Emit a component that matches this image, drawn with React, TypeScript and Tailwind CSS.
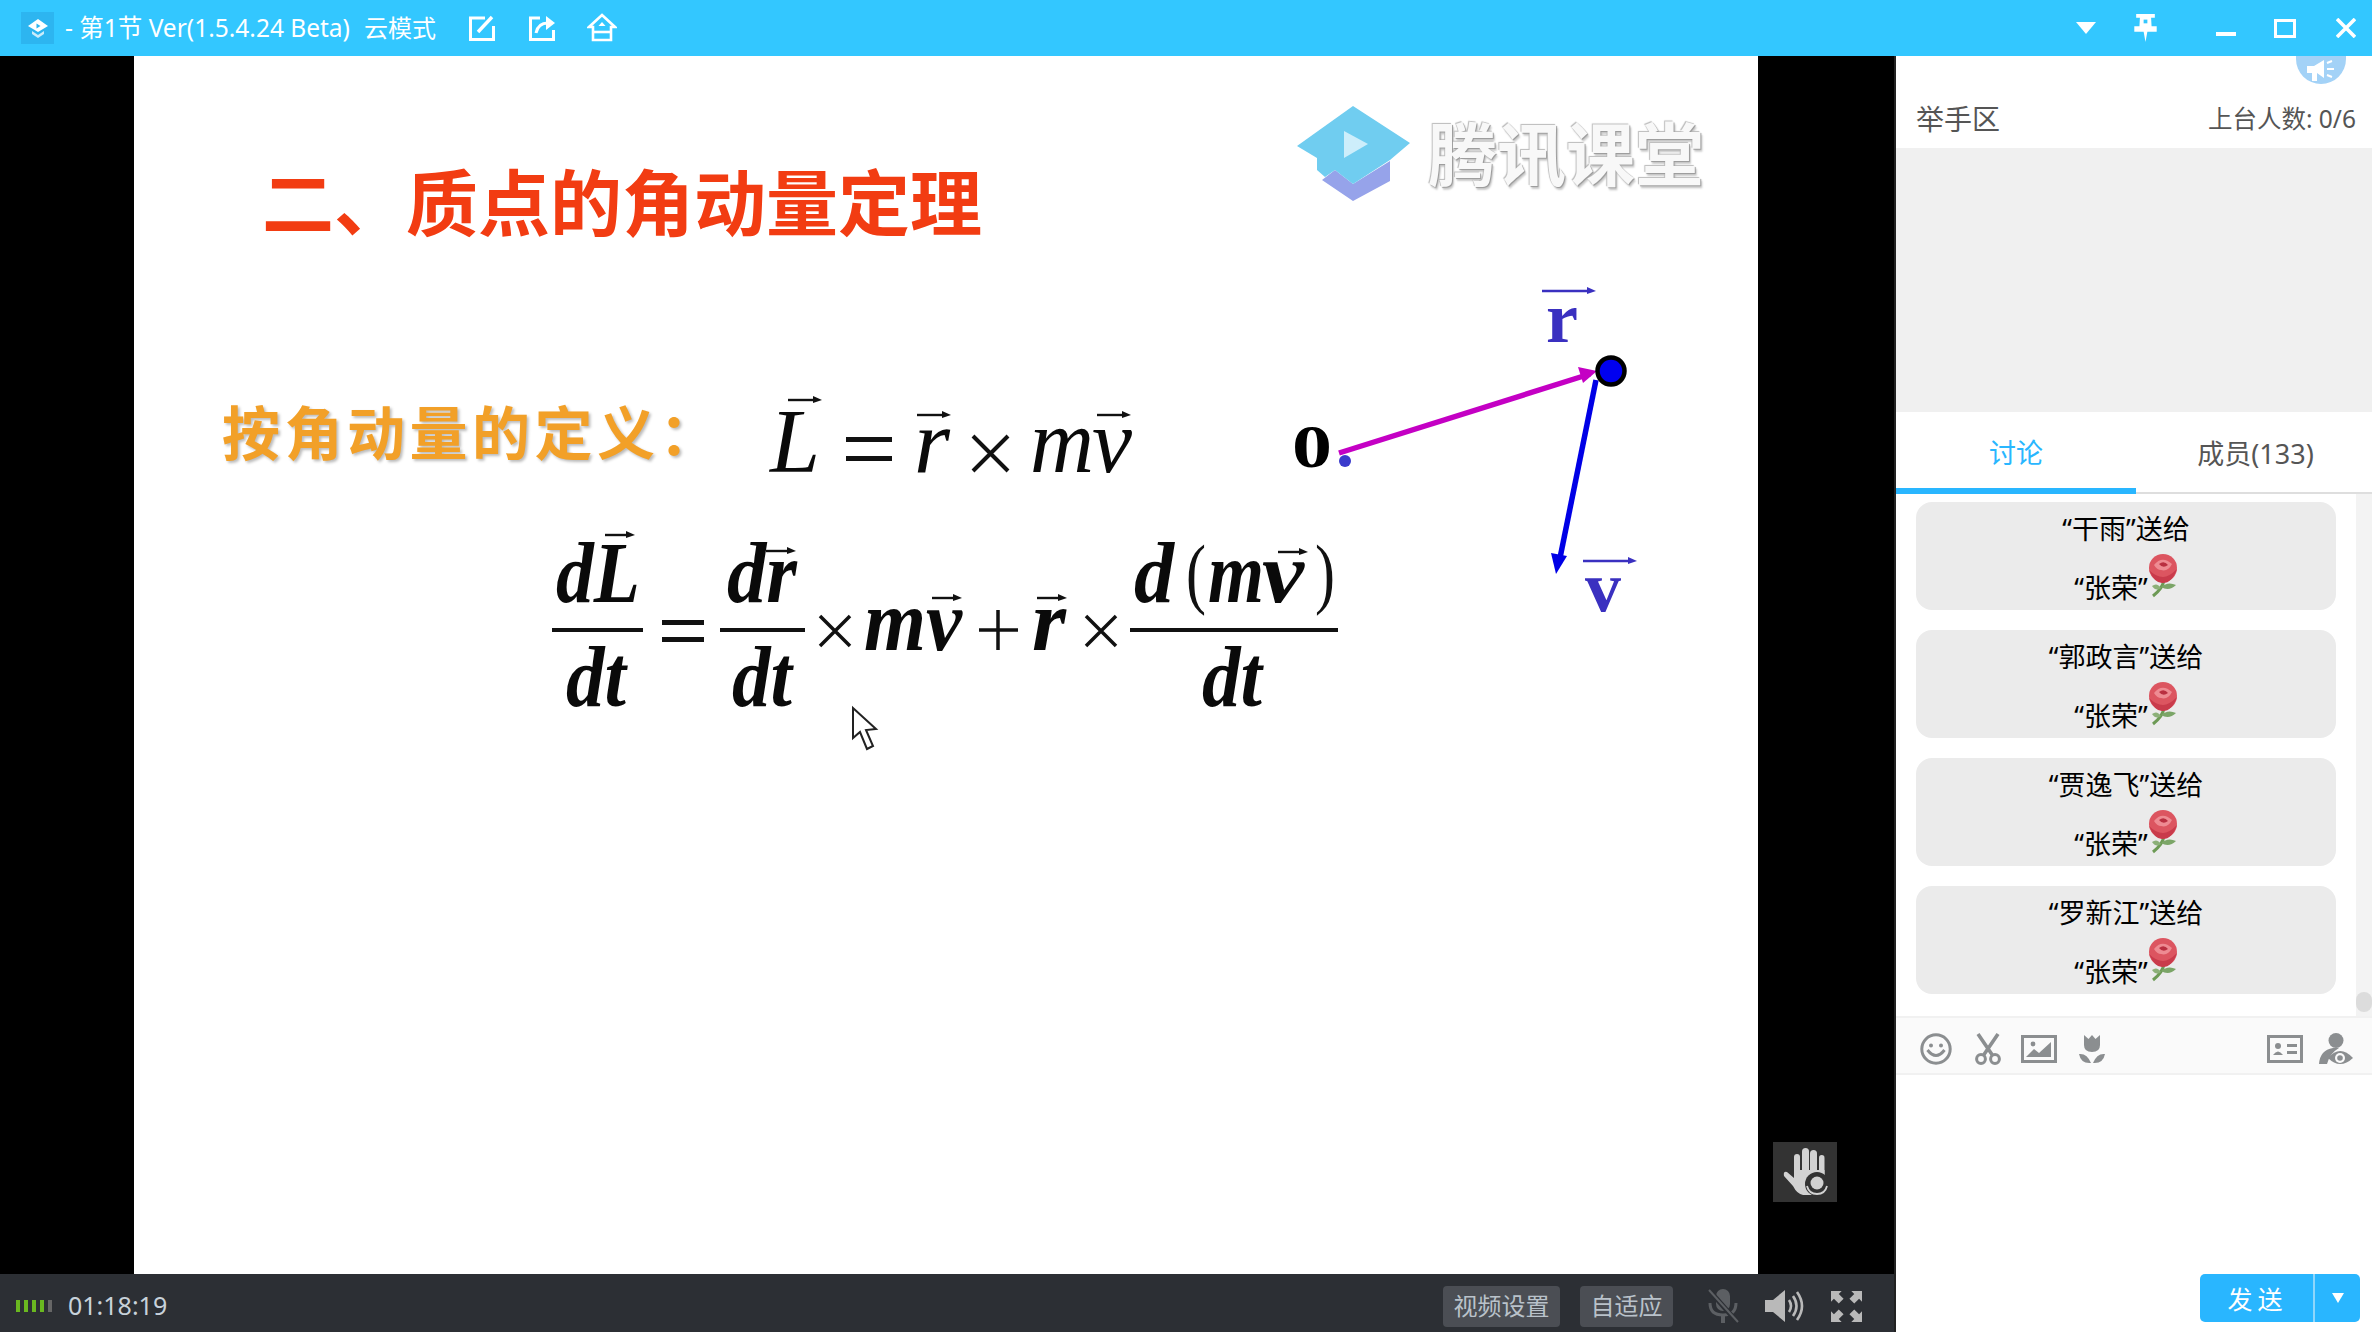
import type { ReactNode } from 'react';

const serif = "font-['Liberation_Serif',serif]";

const gifts = ['干雨', '郭政言', '贾逸飞', '罗新江'];

// little arrow that sits above a vector letter on the slide
function Vec({ x, y, w, color = '#111' }: { x: number; y: number; w: number; color?: string }) {
  return (
    <g>
      <line x1={x} y1={y} x2={x + w - 6} y2={y} stroke={color} strokeWidth="2.4" />
      <path d={`M${x + w - 9} ${y - 4} L${x + w} ${y} L${x + w - 9} ${y + 3} Z`} fill={color} />
    </g>
  );
}

function MathText({ x, y, w, size, bold = true, children }: { x: number; y: number; w: number; size: number; bold?: boolean; children: ReactNode }) {
  return (
    <text
      x={x}
      y={y}
      textLength={w}
      lengthAdjust="spacingAndGlyphs"
      fontSize={size}
      fontStyle="italic"
      fontWeight={bold ? 700 : 400}
      fill="#0a0a0a"
    >
      {children}
    </text>
  );
}

function Bar({ x, w, y = 630 }: { x: number; w: number; y?: number }) {
  return <rect x={x} y={y - 2} width={w} height={4} fill="#111" />;
}

function Formulas() {
  return (
    <svg viewBox="134 56 1624 1218" className={`absolute inset-0 h-full w-full ${serif}`}>
      {/* L = r x mv */}
      <MathText x={770} y={472} w={50} size={92} bold={false}>L</MathText>
      <Vec x={788} y={400} w={34} />
      <rect x={846} y={437} width={46} height={5} fill="#111" />
      <rect x={846} y={456} width={46} height={5} fill="#111" />
      <MathText x={914} y={472} w={36} size={92} bold={false}>r</MathText>
      <Vec x={917} y={415} w={34} />
      <path d="M973 436 L1008 471 M1008 436 L973 471" stroke="#111" strokeWidth="4" />
      <MathText x={1030} y={472} w={64} size={92} bold={false}>m</MathText>
      <MathText x={1092} y={472} w={40} size={92} bold={false}>v</MathText>
      <Vec x={1097} y={415} w={34} />

      {/* dL/dt = dr/dt x mv + r x d(mv)/dt */}
      <MathText x={556} y={602} w={84} size={86}>dL</MathText>
      <Vec x={605} y={535} w={30} />
      <Bar x={552} w={91} />
      <MathText x={566} y={706} w={60} size={86}>dt</MathText>
      <rect x={662} y={620} width={42} height={5} fill="#111" />
      <rect x={662} y={637} width={42} height={5} fill="#111" />
      <MathText x={727} y={602} w={70} size={86}>dr</MathText>
      <Vec x={766} y={551} w={30} />
      <Bar x={720} w={85} />
      <MathText x={732} y={706} w={60} size={86}>dt</MathText>
      <path d="M820 616 L850 646 M850 616 L820 646" stroke="#111" strokeWidth="3.5" />
      <MathText x={864} y={650} w={62} size={86}>m</MathText>
      <MathText x={926} y={650} w={36} size={86}>v</MathText>
      <Vec x={932} y={598} w={30} />
      <path d="M998 610 V650 M979 630 H1018" stroke="#111" strokeWidth="3.5" />
      <MathText x={1032} y={650} w={34} size={86}>r</MathText>
      <Vec x={1037} y={598} w={30} />
      <path d="M1086 616 L1116 646 M1116 616 L1086 646" stroke="#111" strokeWidth="3.5" />
      <MathText x={1134} y={602} w={40} size={86}>d</MathText>
      <text x={1186} y={599} fontSize={78} fill="#111" textLength={20} lengthAdjust="spacingAndGlyphs">(</text>
      <MathText x={1208} y={602} w={56} size={86}>m</MathText>
      <MathText x={1262} y={602} w={42} size={86}>v</MathText>
      <Vec x={1278} y={552} w={30} />
      <text x={1315} y={599} fontSize={78} fill="#111" textLength={20} lengthAdjust="spacingAndGlyphs">)</text>
      <Bar x={1130} w={208} />
      <MathText x={1202} y={706} w={60} size={86}>dt</MathText>

      {/* diagram on the right */}
      <text x={1292} y={467} fontSize={62} fontWeight={700} fill="#000" textLength={40} lengthAdjust="spacingAndGlyphs">0</text>
      <circle cx={1345} cy={461} r={6} fill="#3a3acc" />
      <line x1={1339} y1={453} x2={1590} y2={374} stroke="#c400c4" strokeWidth="5.5" />
      <path d="M1597 371 L1578 367 L1583 383 Z" fill="#c400c4" />
      <line x1={1596} y1={380} x2={1560} y2={558} stroke="#0000e6" strokeWidth="5.5" />
      <path d="M1556 574 L1551 553 L1567 556 Z" fill="#0000e6" />
      <circle cx={1611} cy={371} r={13.5} fill="#0000f0" stroke="#000" strokeWidth="4.5" />
      <text x={1546} y={342} fontSize={72} fontWeight={700} fill="#3a30c0" textLength={32} lengthAdjust="spacingAndGlyphs">r</text>
      <Vec x={1542} y={291} w={54} color="#3a30c0" />
      <text x={1585} y={611} fontSize={72} fontWeight={700} fill="#3a30c0" textLength={36} lengthAdjust="spacingAndGlyphs">v</text>
      <Vec x={1583} y={561} w={54} color="#3a30c0" />

      {/* mouse pointer */}
      <path d="M853 708 L853 738 L860 732 L867 749 L873 746 L866 730 L876 729 Z" fill="#fff" stroke="#222" strokeWidth="2" />

      {/* logo cap */}
      <path d="M1322 180 L1335 170 L1353 184 L1390 161 V181 L1353 201 Z" fill="#96a3ea" />
      <path d="M1297 146 L1353 106 L1410 143 L1390 160 L1353 184 L1335 170 L1325 177 L1317 170 V158 Z" fill="#70cdf0" />
      <path d="M1344 131 L1368 144 L1344 158 Z" fill="#cdeefb" />
    </svg>
  );
}

function Slide() {
  return (
    <div className="relative flex-1 bg-white blur-[0.5px]">
      <h1 className="absolute left-[128px] top-[100px] text-[72px] leading-[92px] font-bold whitespace-nowrap text-[#f23c12]">
        二、质点的角动量定理
      </h1>
      <p className="absolute left-[88px] top-[339px] text-[58px] leading-[76px] font-bold tracking-[4.5px] whitespace-nowrap text-[#f2a028] [text-shadow:2px_2px_3px_#bbb]">
        按角动量的定义：
      </p>
      <span className="absolute left-[1294px] top-[53px] text-[69px] leading-[90px] font-bold whitespace-nowrap text-[#f8f8f8] [text-shadow:1px_1px_1px_#999,-1px_-1px_1px_#bbb,2px_3px_2px_#ccc]">
        腾讯课堂
      </span>
      <Formulas />
    </div>
  );
}

function Rose() {
  return (
    <svg viewBox="0 0 30 44" className="mb-[9px] h-[44px] w-[30px]">
      <path d="M16 26 Q15 34 5 42" stroke="#6d9a55" strokeWidth="3" fill="none" />
      <path d="M13 33 Q20 27 28 31 Q21 38 13 33 Z" fill="#7ba567" />
      <path d="M4 32 Q9 28 13 34 Q8 38 4 32 Z" fill="#8cb078" />
      <circle cx="15" cy="14" r="14" fill="#dc5560" />
      <path d="M1 16 Q7 30 15 29 Q24 29 29 15 Q21 23 15 23 Q8 23 1 16 Z" fill="#c93b4b" />
      <path d="M6 11 Q14 1 24 10 Q20 18 13 16 Q9 16 6 11 Z" fill="#ee8b92" />
      <path d="M11 10 Q16 6 20 11 Q15 15 11 10 Z" fill="#b92f40" />
    </svg>
  );
}

function GiftCard({ name }: { name: string }) {
  return (
    <div className="flex h-[108px] w-[420px] flex-col items-center rounded-[16px] bg-[#ebebeb] pt-[7px] text-[27px] text-black">
      <div className="leading-[40px]">“{name}”送给</div>
      <div className="flex h-[58px] items-end justify-center">
        <span className="leading-[38px]">“张荣”</span>
        <Rose />
      </div>
    </div>
  );
}

function Toolbar() {
  return (
    <div className="flex h-[59px] items-center border-y-2 border-[#f1f1f1] bg-[#fafafa] pt-[6px] pr-[19px] pl-[24px] text-[#8b8e90]">
      <svg viewBox="0 0 32 32" className="h-[32px] w-[32px]" fill="none" stroke="currentColor" strokeWidth="3">
        <circle cx="16" cy="16" r="14.2" />
        <circle cx="11" cy="12.5" r="2" fill="currentColor" stroke="none" />
        <circle cx="21" cy="12.5" r="2" fill="currentColor" stroke="none" />
        <path d="M7.5 17 Q16 28 24.5 17" />
      </svg>
      <svg viewBox="0 0 28 32" className="ml-[22px] h-[32px] w-[28px]" fill="none" stroke="currentColor">
        <path d="M4 1 L19 23 M24 1 L9 23" strokeWidth="3.6" />
        <circle cx="7" cy="26" r="4.4" strokeWidth="3" />
        <circle cx="21" cy="26" r="4.4" strokeWidth="3" />
      </svg>
      <svg viewBox="0 0 36 28" className="ml-[19px] h-[28px] w-[36px]">
        <rect x="1.5" y="1.5" width="33" height="25" fill="none" stroke="currentColor" strokeWidth="3" />
        <circle cx="12" cy="9" r="2.4" fill="currentColor" />
        <path d="M5 22 L13 14 L18 18 L30 7 V22 Z" fill="currentColor" />
      </svg>
      <svg viewBox="0 0 26 30" className="ml-[22px] h-[30px] w-[26px]" fill="currentColor">
        <path d="M5 1 L9.5 5 L13 1 L16.5 5 L21 1 V11 Q21 18 13 18 Q5 18 5 11 Z" />
        <path d="M0 20 Q8 19 12 29 Q2 30 0 20 Z" />
        <path d="M26 20 Q18 19 14 29 Q24 30 26 20 Z" />
      </svg>
      <div className="ml-auto flex items-center gap-[16px]">
        <svg viewBox="0 0 36 28" className="h-[28px] w-[36px]">
          <rect width="36" height="28" fill="currentColor" />
          <rect x="3" y="3" width="30" height="22" fill="#fafafa" />
          <circle cx="11" cy="11" r="3" fill="currentColor" />
          <path d="M6 20 Q11 13 16 20 Z" fill="currentColor" />
          <rect x="20" y="9" width="10" height="3" fill="currentColor" />
          <rect x="20" y="16" width="10" height="3" fill="currentColor" />
        </svg>
        <svg viewBox="0 0 34 32" className="h-[32px] w-[34px]" fill="currentColor">
          <circle cx="17" cy="7.5" r="7.5" />
          <path d="M0 31 Q1 17 14 15 L20 15 Q11 20 8 31 Z" />
          <path d="M9 25 Q21 11 34 25 Q21 37 9 25 Z" />
          <circle cx="21" cy="25" r="5" fill="#fafafa" />
          <circle cx="21" cy="25" r="2.8" />
        </svg>
      </div>
    </div>
  );
}

function TitleBar() {
  return (
    <div className="flex h-[56px] items-center bg-[#33c7ff] pr-[16px] pl-[21px] text-white">
      <div className="flex h-[32px] w-[33px] items-center justify-center bg-[#2db5f0]">
        <svg viewBox="0 0 24 24" className="h-[24px] w-[24px]" fill="#fff">
          <path d="M12 3 L22 10 L12 16 L2 10 Z" />
          <path d="M6 15 L12 19 L18 15 V18 L12 22 L6 18 Z" opacity="0.75" />
          <path d="M10.5 7.5 L14.5 10 L10.5 12.5 Z" fill="#2db5f0" />
        </svg>
      </div>
      <span className="ml-[11px] text-[24.5px] whitespace-pre">- 第1节 Ver(1.5.4.24 Beta)</span>
      <span className="ml-[14px] text-[24px]">云模式</span>
      <svg viewBox="0 0 28 28" className="ml-[32px] h-[28px] w-[28px]" fill="none" stroke="#fff" strokeWidth="3">
        <path d="M17 4 H2.5 V25.5 H25.5 V12" />
        <path d="M10 18 L24 3" strokeWidth="3.4" />
      </svg>
      <svg viewBox="0 0 28 28" className="ml-[32px] h-[28px] w-[28px]" fill="none" stroke="#fff" strokeWidth="3">
        <path d="M12 4 H2.5 V25.5 H25.5 V16" />
        <path d="M8 19 Q10 9 20 9" />
        <path d="M18 2 L27 9 L18 16 Z" fill="#fff" stroke="none" />
      </svg>
      <svg viewBox="0 0 30 30" className="ml-[31px] h-[30px] w-[30px]" fill="none" stroke="#fff" strokeWidth="2.6">
        <path d="M15 2 L28 14 H24 V27 H6 V14 H2 Z" />
        <path d="M6 19 H24" />
        <path d="M15 9 L18.5 13 H11.5 Z" fill="#fff" stroke="none" />
      </svg>

      <div className="ml-auto flex items-center">
        <svg viewBox="0 0 20 12" className="h-[12px] w-[20px]">
          <path d="M0 0 H20 L10 12 Z" fill="#fff" />
        </svg>
        <svg viewBox="0 0 24 30" className="ml-[38px] h-[28px] w-[23px]" fill="#fff">
          <path d="M2 0 H22 V4 H18 L18.5 13 H24 V19 H14 L12 30 L10 19 H0 V13 H5.5 L6 4 H2 Z" />
          <rect x="10" y="6" width="4" height="4" fill="#33c7ff" />
        </svg>
        <div className="mt-[12px] ml-[59px] h-[4px] w-[20px] bg-white" />
        <div className="ml-[38px] h-[19px] w-[22px] border-[3.5px] border-white" />
        <svg viewBox="0 0 20 20" className="ml-[40px] h-[20px] w-[20px]" stroke="#fff" strokeWidth="3.6">
          <path d="M1 1 L19 19 M19 1 L1 19" />
        </svg>
      </div>
    </div>
  );
}

function BottomBar() {
  return (
    <div className="flex h-[58px] items-center bg-[#2c2f34] pt-[6px] pr-[32px] pl-[16px]">
      <div className="flex gap-[4px]">
        {['#6ab820', '#6ab820', '#6ab820', '#6ab820', '#666666'].map((c, i) => (
          <i key={i} className="block h-[12px] w-[4px]" style={{ background: c }} />
        ))}
      </div>
      <span className="ml-[16px] text-[25px] text-[#c8d2da]">01:18:19</span>
      <div className="ml-auto flex items-center">
        <span className="flex h-[41px] w-[117px] items-center justify-center rounded-[4px] bg-[#4b4e54] text-[24px] text-[#b9c2ca]">视频设置</span>
        <span className="ml-[20px] flex h-[41px] w-[93px] items-center justify-center rounded-[4px] bg-[#4b4e54] text-[24px] text-[#b9c2ca]">自适应</span>
        <svg viewBox="0 0 32 36" className="ml-[34px] h-[36px] w-[32px]" fill="#5c5f63">
          <rect x="9" y="1" width="14" height="22" rx="7" />
          <path d="M3 15 Q3 27 16 27 Q29 27 29 15" fill="none" stroke="#5c5f63" strokeWidth="3" />
          <rect x="14" y="27" width="4" height="8" />
          <path d="M1 1 L31 35" stroke="#2c2f34" strokeWidth="5" />
          <path d="M2 2 L31 34" stroke="#5c5f63" strokeWidth="2" />
        </svg>
        <svg viewBox="0 0 40 34" className="ml-[26px] h-[34px] w-[40px]" fill="#b9b9b9">
          <path d="M0 11 H8 L20 1 V33 L8 23 H0 Z" />
          <path d="M24 11 Q28 17 24 23 M28 7 Q35 17 28 27 M32 3 Q42 17 32 31" fill="none" stroke="#b9b9b9" strokeWidth="2.6" />
        </svg>
        <svg viewBox="0 0 32 32" className="ml-[26px] h-[31px] w-[31px]" fill="#b9b9b9">
          <path d="M0 0 H11 L8 3 L13 8 L8 13 L3 8 L0 11 Z" />
          <path d="M32 0 H21 L24 3 L19 8 L24 13 L29 8 L32 11 Z" />
          <path d="M0 32 H11 L8 29 L13 24 L8 19 L3 24 L0 21 Z" />
          <path d="M32 32 H21 L24 29 L19 24 L24 19 L29 24 L32 21 Z" />
        </svg>
      </div>
    </div>
  );
}

function Sidebar() {
  return (
    <aside className="relative flex flex-1 flex-col bg-white">
      {/* notice bubble, cut off by the title bar */}
      <div className="absolute top-0 right-[26px] flex h-[28px] w-[50px] items-end justify-center overflow-hidden rounded-b-[25px] bg-[#a3d2f7] pb-[2px]">
        <svg viewBox="0 0 28 22" className="h-[22px] w-[28px]" fill="#fff">
          <path d="M0 6 H7 L17 0 V18 L10 13 V21 H5 V13 H0 Z" />
          <path d="M20 3 L25 1 M20 9 H27 M20 15 L25 17" stroke="#fff" strokeWidth="2" />
        </svg>
      </div>
      <div className="flex h-[92px] items-center justify-between pt-[34px] pr-[16px] pl-[20px] text-[#555]">
        <span className="text-[28px]">举手区</span>
        <span className="text-[24.5px]">上台人数: 0/6</span>
      </div>
      <div className="h-[264px] bg-[#f0f0f0]" />
      <div className="flex h-[82px] border-b-2 border-[#dedede] text-[27px]">
        <div className="-mb-[2px] flex w-[240px] items-center justify-center border-b-[6px] border-[#29b6ff] pt-[6px] text-[#29b6ff]">讨论</div>
        <div className="flex flex-1 items-center justify-center pt-[4px] pl-[3px] text-[#555]">成员(133)</div>
      </div>
      <div className="flex h-[522px]">
        <div className="flex flex-1 flex-col gap-[20px] pt-[8px] pl-[20px]">
          {gifts.map((g) => (
            <GiftCard key={g} name={g} />
          ))}
        </div>
        <div className="flex w-[16px] flex-col justify-end bg-[#f3f3f3] pb-[4px]">
          <div className="h-[20px] rounded-full bg-[#dcdcdc]" />
        </div>
      </div>
      <Toolbar />
      <div className="flex flex-1 items-end justify-end pr-[12px] pb-[10px]">
        <div className="flex h-[48px] w-[160px] rounded-[5px] bg-[#29b6ff] text-white">
          <span className="flex w-[113px] items-center justify-center pt-[3px] pl-[2px] text-[25px] tracking-[5px]">发送</span>
          <span className="flex flex-1 items-center justify-center border-l-2 border-[#8fd6fb]">
            <svg viewBox="0 0 12 10" className="h-[10px] w-[12px]">
              <path d="M0 0 H12 L6 10 Z" fill="#fff" />
            </svg>
          </span>
        </div>
      </div>
    </aside>
  );
}

export default function App() {
  return (
    <div className="flex h-[1332px] w-[2372px] flex-col overflow-hidden bg-white font-['Noto_Sans','Noto_Sans_CJK_SC',sans-serif]">
      <TitleBar />
      <div className="flex flex-1">
        <div className="flex w-[1896px] flex-col border-r-2 border-[#222]">
          <div className="relative flex flex-1 bg-black pr-[136px] pl-[134px]">
            <Slide />
            {/* raise hand button over the video */}
            <div className="absolute top-[1086px] left-[1773px] flex h-[60px] w-[64px] items-center justify-center bg-[#333]">
              <svg viewBox="0 0 45 48" className="h-[48px] w-[45px]" fill="#d2d2d2">
                <rect x="11" y="6" width="6" height="26" rx="3" />
                <rect x="19" y="0" width="7" height="30" rx="3.5" />
                <rect x="27" y="2" width="7" height="28" rx="3.5" />
                <rect x="36" y="7" width="5.5" height="24" rx="2.7" />
                <path d="M11 22 H41.5 V36 L30 47 H20 Q14 46 10 38 L1 28 Q0 23 4 24 L11 30 Z" />
                <circle cx="34" cy="36" r="12" fill="#333" />
                <circle cx="34" cy="35" r="6.5" />
                <path d="M24 38 Q26 46 34 46 Q42 46 44 38" fill="none" stroke="#d2d2d2" strokeWidth="1.8" />
              </svg>
            </div>
          </div>
          <BottomBar />
        </div>
        <Sidebar />
      </div>
    </div>
  );
}
